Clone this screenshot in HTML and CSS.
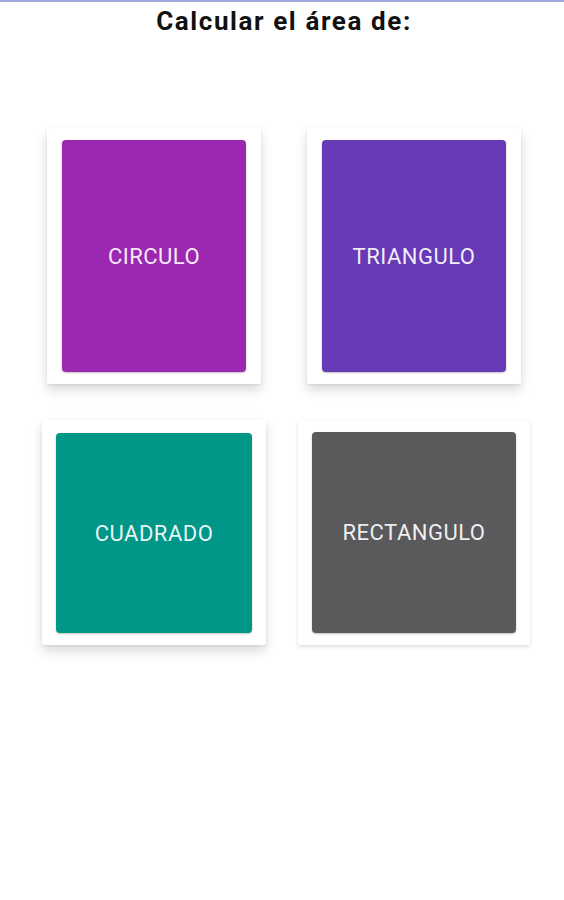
FILE: index.html
```html
<!DOCTYPE html>
<html lang="es">
<head>
    <meta charset="UTF-8">
    <meta name="viewport" content="width=device-width, initial-scale=1.0">
    <title>Calcular el área</title>
    <link rel="stylesheet" href="styles.css">
</head>
<body>
    <div class="screen">
        <h1 class="title">Calcular el área de:</h1>

        <div class="row row-top">
            <div class="card card-circle">
                <button class="shape-btn btn-circle">Circulo</button>
            </div>
            <div class="card card-triangle">
                <button class="shape-btn btn-triangle">Triangulo</button>
            </div>
        </div>

        <div class="row row-bottom">
            <div class="card card-square">
                <button class="shape-btn btn-square">Cuadrado</button>
            </div>
            <div class="card card-rect">
                <button class="shape-btn btn-rect">Rectangulo</button>
            </div>
        </div>
    </div>
</body>
</html>
```

FILE: styles.css
```css
* {
    margin: 0;
    padding: 0;
    box-sizing: border-box;
}

body {
    font-family: Roboto, 'Liberation Sans', sans-serif;
    background-color: #fff;
    color: #111;
}

.screen {
    width: 564px;
    min-height: 900px;
    border-top: 2px solid #9fa8da;
}

.title {
    font-size: 26px;
    font-weight: 700;
    letter-spacing: 1.6px;
    text-align: center;
    line-height: 28px;
    padding-top: 5px;
    padding-left: 4px;
}

.row {
    display: flex;
    align-items: flex-start;
}

.row-top {
    margin-top: 93px;
    padding-left: 47px;
    gap: 46px;
}

.row-bottom {
    margin-top: 36px;
    padding-left: 42px;
    gap: 32px;
}

.card {
    display: flex;
    background-color: #fff;
    border-radius: 2px;
    box-shadow: 0 6px 12px rgba(0, 0, 0, 0.15), 0 1px 3px rgba(0, 0, 0, 0.08);
}

.card-circle,
.card-triangle {
    width: 214px;
    height: 256px;
    padding: 12px 15px;
}

.card-square {
    width: 224px;
    height: 225px;
    padding: 13px 14px 12px;
}

.card-rect {
    width: 232px;
    height: 225px;
    padding: 12px 14px;
    box-shadow: 0 2px 4px rgba(0, 0, 0, 0.12), 0 0 2px rgba(0, 0, 0, 0.06);
}

.shape-btn {
    flex: 1;
    border: none;
    border-radius: 4px;
    font-family: Roboto, 'Liberation Sans', sans-serif;
    font-size: 22px;
    letter-spacing: 0.5px;
    text-transform: uppercase;
    color: rgba(255, 255, 255, 0.92);
    box-shadow: 0 1px 2px rgba(0, 0, 0, 0.25);
    cursor: pointer;
}

.btn-circle {
    background-color: #9c27b0;
}

.btn-triangle {
    background-color: #673ab7;
}

.btn-square {
    background-color: #009688;
}

.btn-rect {
    background-color: #5a5a5c;
}
```
